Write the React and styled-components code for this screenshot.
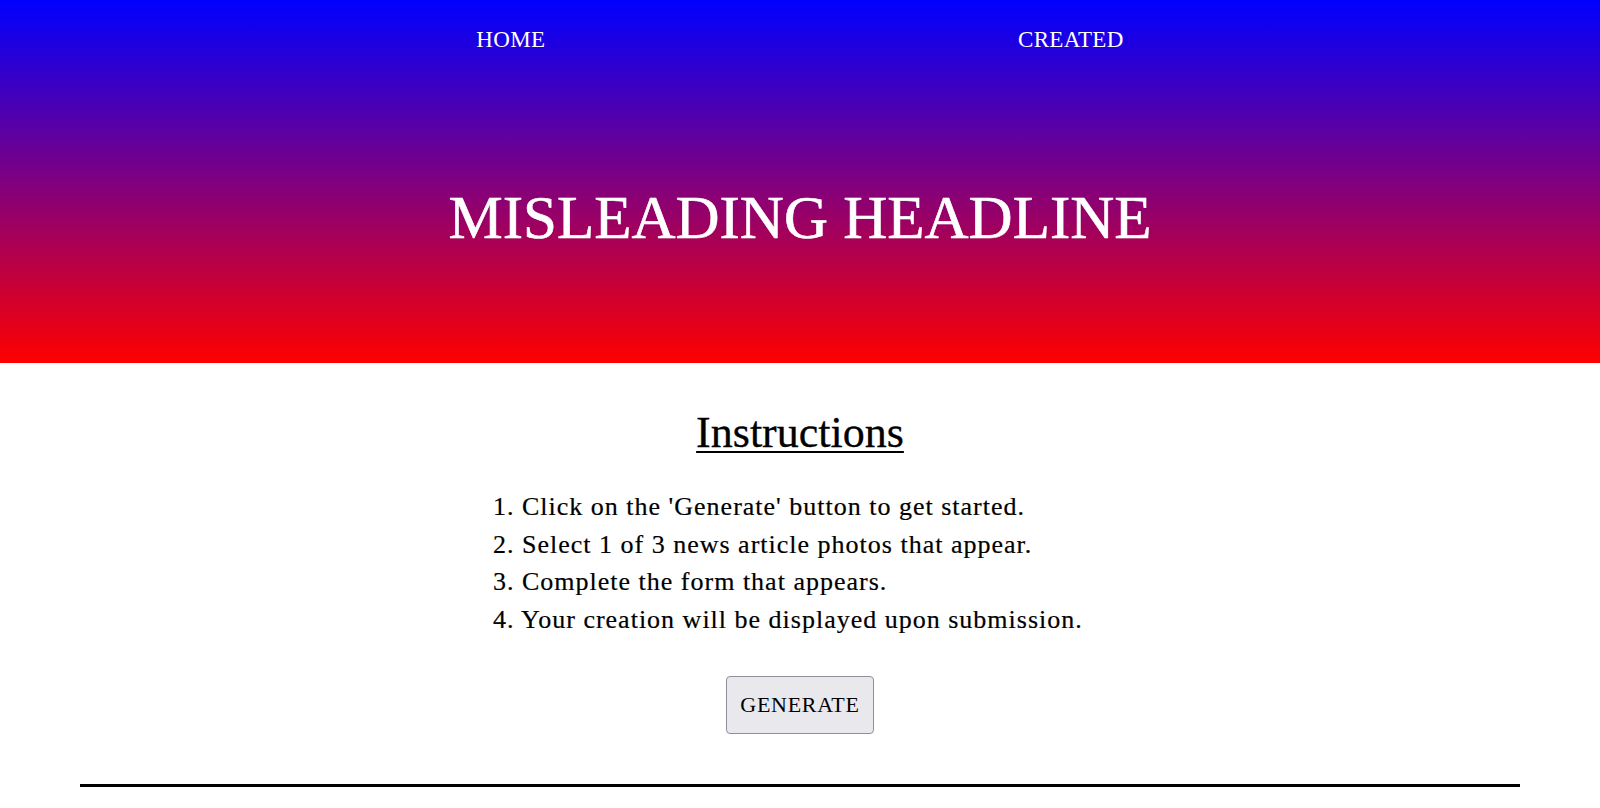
import React from "react";
import styled, { createGlobalStyle } from "styled-components";

const GlobalStyle = createGlobalStyle`
  html, body {
    margin: 0;
    padding: 0;
    background: #ffffff;
  }
  body {
    font-family: "Liberation Serif", "Times New Roman", serif;
    color: #000000;
  }
  ::-webkit-scrollbar {
    width: 8px;
  }
  ::-webkit-scrollbar-track {
    background: transparent;
  }
  ::-webkit-scrollbar-thumb {
    background: #cccccc;
    border-radius: 4px;
  }
`;

const Header = styled.header`
  height: 363px;
  background: linear-gradient(to bottom, #0000ff, #ff0000);
  display: flex;
  flex-direction: column;
`;

const Nav = styled.nav`
  width: 70%;
  margin: 0 auto;
  padding-top: 26px;
  display: flex;
  justify-content: space-around;
`;

const NavLink = styled.a`
  color: #ffffff;
  font-size: 23px;
  line-height: 28px;
  letter-spacing: 0.3px;
  text-decoration: none;
  cursor: pointer;
`;

const Title = styled.h1`
  margin: 133px 0 0;
  text-align: center;
  color: #ffffff;
  font-size: 61px;
  font-weight: normal;
  line-height: 1;
  -webkit-text-stroke: 0.6px #ffffff;
`;

const Main = styled.main`
  display: flex;
  flex-direction: column;
  align-items: center;
`;

const Heading = styled.h2`
  margin: 43px 0 0;
  font-size: 44px;
  font-weight: normal;
  line-height: 53px;
  text-decoration: underline;
  text-decoration-thickness: 2px;
  text-underline-offset: 4px;
  -webkit-text-stroke: 0.3px #000000;
`;

const Steps = styled.ol`
  margin: 29px 0 0 493px;
  padding: 0;
  list-style: none;
  font-size: 26px;
  line-height: 37.6px;
  letter-spacing: 1px;
  align-self: flex-start;
  -webkit-text-stroke: 0.2px #000000;
`;

const Step = styled.li``;

const Button = styled.button`
  margin-top: 38px;
  height: 58px;
  padding: 0 13px;
  font-family: inherit;
  font-size: 22px;
  letter-spacing: 0.7px;
  color: #000000;
  background: #e9e9ed;
  border: 1px solid #8f8f9d;
  border-radius: 4px;
  cursor: pointer;
`;

const Rule = styled.hr`
  width: 90%;
  margin: 50px auto 0;
  border: none;
  border-top: 3px solid #000000;
`;

const Gallery = styled.section`
  min-height: 840px;
`;

const steps = [
  "Click on the 'Generate' button to get started.",
  "Select 1 of 3 news article photos that appear.",
  "Complete the form that appears.",
  "Your creation will be displayed upon submission."
];

export default function App() {
  return (
    <>
      <GlobalStyle />
      <Header>
        <Nav>
          <NavLink>HOME</NavLink>
          <NavLink>CREATED</NavLink>
        </Nav>
        <Title>MISLEADING HEADLINE</Title>
      </Header>
      <Main>
        <Heading>Instructions</Heading>
        <Steps>
          {steps.map((s, i) => (
            <Step key={i}>
              {i + 1}. {s}
            </Step>
          ))}
        </Steps>
        <Button>GENERATE</Button>
      </Main>
      <Rule />
      <Gallery />
    </>
  );
}
